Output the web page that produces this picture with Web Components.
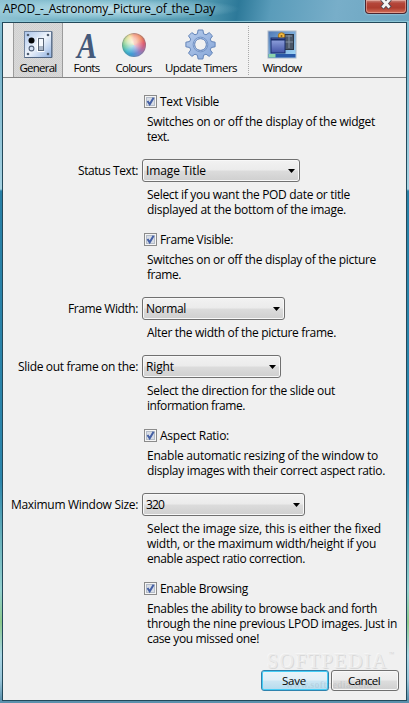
<!DOCTYPE html>
<html lang="en">
<head>
<meta charset="utf-8">
<title>APOD_-_Astronomy_Picture_of_the_Day</title>
<style>
  html, body {
    margin: 0;
    height: 703px;
    overflow: hidden;
  }
  body {
    font-family: "Open Sans", "Noto Sans", sans-serif;
    font-size: 12px;
    line-height: 15px;
    color: #000;
  }
</style>
</head>
<body>
<prefs-window></prefs-window>

<script>
// One line of text, tracked so that it takes the given width.
class FitText extends HTMLElement {
  constructor() {
    super();
    this.attachShadow({ mode: 'open' });
    this.shadowRoot.innerHTML = `
      <style>
        :host { display: block; white-space: nowrap; }
        span { display: inline-block; }
      </style>
      <span><slot></slot></span>
    `;
  }

  connectedCallback() {
    const span = this.shadowRoot.querySelector('span');
    const target = Number(this.getAttribute('width'));
    const count = this.textContent.length;
    if (!target || !count) return;
    const natural = span.getBoundingClientRect().width;
    const spacing = (target - natural) / count;
    span.style.letterSpacing = spacing.toFixed(3) + 'px';
  }
}

class TitleBar extends HTMLElement {
  connectedCallback() {
    this.attachShadow({ mode: 'open' });
    this.shadowRoot.innerHTML = `
      <style>
        :host {
          display: flex;
          justify-content: space-between;
          align-items: flex-start;
          box-sizing: border-box;
          height: 22px;
          padding: 0 2px 0 3px;
          border-bottom: 1px solid #8cc6d6;
          background:
            radial-gradient(ellipse 135px 12px at 105px 9px, rgba(222, 242, 248, .8), rgba(180, 222, 234, .5) 60%, transparent),
            linear-gradient(100deg, #8fc3d3 0, #67aabe 22%, #4f97af 50%, #2d7999 58%, #5a9cba 66%, #78aec9 82%, #6ba5c0 100%);
        }
        .close {
          display: flex;
          justify-content: center;
          box-sizing: border-box;
          width: 42px;
          height: 14px;
          border: 1px solid #4b2630;
          border-top: 0;
          border-radius: 0 0 4px 4px;
          background: linear-gradient(#c98a80 0, #b4463a 25%, #ad3c2e 60%, #d2705a 100%);
          box-shadow: inset 0 0 0 1px rgba(255, 210, 200, .45), 0 0 2px #d4edf5;
        }
        svg { display: block; }
      </style>
      <slot></slot>
      <div class="close">
        <svg width="14" height="10" viewBox="0 0 14 10">
          <path d="M3 -1 L11 8 M11 -1 L3 8" stroke="#4d4650" stroke-width="4.5"/>
          <path d="M3 -1 L10.500 7.500 M11 -1 L3.500 7.500" stroke="#f4f4f4" stroke-width="2.8"/>
        </svg>
      </div>
    `;
  }
}

const ICONS = {
  general: `
    <defs><linearGradient id="p" x1="0" y1="0" x2="1" y2="1">
      <stop offset="0" stop-color="#a9c3ea"/><stop offset=".5" stop-color="#f0f5fc"/><stop offset="1" stop-color="#8fb0e0"/>
    </linearGradient></defs>
    <rect x="2.5" y="3.5" width="27" height="26" fill="url(#p)" stroke="#71839d"/>
    <path d="M3 29.5h27v-26" fill="none" stroke="#526683"/>
    <g fill="#4f5d70"><circle cx="6" cy="7" r="1.3"/><circle cx="26" cy="7" r="1.3"/><circle cx="6" cy="26" r="1.3"/><circle cx="26" cy="26" r="1.3"/></g>
    <circle cx="9.5" cy="12.5" r="3" fill="#050608"/>
    <circle cx="9.5" cy="20.5" r="2.4" fill="#d4e1f4" stroke="#53627a" stroke-width="1.1"/>
    <rect x="16.5" y="10.5" width="5" height="12" fill="#f5f8fd" stroke="#5a6678"/>
    <path d="M17 18h4v4h-4z" fill="#aab6c7"/><path d="M15.5 9.5v14h7" fill="none" stroke="#fff"/>`,
  fonts: `
    <text x="6" y="30" font-family="Liberation Serif, serif" font-style="italic" font-weight="bold" font-size="36" textLength="20" lengthAdjust="spacingAndGlyphs" fill="#455a7b">A</text>`,
  colours: `
    <foreignObject x="4" y="5" width="24" height="24">
      <div style="width:24px;height:24px;border-radius:50%;background:
        radial-gradient(circle at 42% 38%, #fffc 0, #fff9 22%, #fff0 58%),
        conic-gradient(#ef7250, #ed7a4a 12%, #e05a6c 22%, #b86c9e 32%, #7b86cd 43%, #3f9bd4 54%, #36b4c7 64%, #50be81 74%, #a9cf63 84%, #efc95a 93%, #ef7250);
        box-shadow: inset 0 0 1px 1px #6d7e8e88"></div>
    </foreignObject>`,
  timers: `
    <defs><linearGradient id="g" x1="0" y1="0" x2="1" y2="1">
      <stop offset="0" stop-color="#b8cdec"/><stop offset="1" stop-color="#85a5d8"/>
    </linearGradient></defs>
    <g fill="url(#g)" stroke="#6384b8" stroke-width="1" transform="translate(-.500 -.500)">
      <path fill-rule="evenodd" d="M13.6 2.5h4.8l.7 3.8 2.4 1 3.2-2.2 3.3 3.3-2.2 3.2 1 2.4 3.8.7v4.6l-3.8.7-1 2.4 2.2 3.2-3.3 3.3-3.2-2.2-2.4 1-.7 3.800h-4.800l-.7-3.800-2.400-1-3.200 2.200L4 25.600l2.200-3.200-1-2.400-3.800-.7v-4.600l3.800-.7 1-2.400L4 8.400l3.300-3.300 3.200 2.200 2.400-1zM16 11.200a5.800 5.800 0 1 0 .01 0z"/>
      <circle cx="16" cy="17" r="7.400" fill="none" stroke="#7796c7"/>
    </g>`,
  window: `
    <defs><linearGradient id="d" x1="0" y1="0" x2="1" y2="1">
      <stop offset="0" stop-color="#4f78b5"/><stop offset="1" stop-color="#a5dcfc"/>
    </linearGradient><linearGradient id="w" x1="0" y1="0" x2="0" y2="1">
      <stop offset="0" stop-color="#98abe3"/><stop offset="1" stop-color="#4253a5"/>
    </linearGradient></defs>
    <rect x="2" y="3" width="28" height="27" fill="url(#d)" stroke="#aebaca"/>
    <rect x="18.500" y="6.500" width="9" height="15" fill="#4b5768" stroke="#2c3747"/>
    <path d="M20 8h6M19 14h8M23 7v13" stroke="#8694a5"/>
    <circle cx="15.500" cy="8" r="3.300" fill="#f0b83e" stroke="#a8751b"/><circle cx="15.500" cy="8" r="1" fill="#805d20"/>
    <rect x="5" y="10" width="14" height="15" fill="url(#w)" stroke="#192c6b"/>
    <path d="M5 11.500h14" stroke="#192c6b" stroke-width="2"/>
    <rect x="2.500" y="26" width="27" height="3.500" fill="#2959a9"/><rect x="2.500" y="26" width="7" height="3.500" fill="#8cd3ab"/>`
};

class ToolButton extends HTMLElement {
  connectedCallback() {
    this.attachShadow({ mode: 'open' });
    this.shadowRoot.innerHTML = `
      <style>
        :host {
          display: flex;
          flex-direction: column;
          align-items: center;
          box-sizing: border-box;
          padding-top: 5px;
          font-size: 11.5px;
        }
        :host([selected]) {
          background: repeating-conic-gradient(#d1d1d1 0 25%, #d9d9d9 0 50%) 0 0 / 2px 2px;
          border: solid #9c9c9c;
          border-width: 0 1px;
        }
        svg { display: block; height: 32px; overflow: visible; }
      </style>
      <svg width="32" height="32" viewBox="0 0 32 32">${ICONS[this.getAttribute('icon')]}</svg>
      <slot></slot>
    `;
  }
}

class ToolBar extends HTMLElement {
  connectedCallback() {
    this.attachShadow({ mode: 'open' });
    this.shadowRoot.innerHTML = `
      <style>
        :host {
          display: flex;
          box-sizing: border-box;
          height: 55px;
          padding-left: 10px;
          background: #f1f1f1;
          border-bottom: 1px solid #858585;
        }
      </style>
      <slot></slot>
    `;
  }
}

class CheckBox extends HTMLElement {
  connectedCallback() {
    this.attachShadow({ mode: 'open' });
    this.shadowRoot.innerHTML = `
      <style>
        :host {
          display: flex;
          align-items: center;
          gap: 3px;
          height: 15px;
          padding-left: 2px;
        }
        svg { display: block; flex: none; }
      </style>
      <svg width="13" height="13" viewBox="0 0 13 13">
        <rect x=".5" y=".5" width="12" height="12" fill="#f5f5f5" stroke="#8b8b8b"/>
        <rect x="2.5" y="2.5" width="8" height="8" fill="#d8dde6" stroke="#b4bcc8"/>
        <path d="M3.500 6 L5.700 9.300 L9.600 2.700" fill="none" stroke="#4560a5" stroke-width="2"/>
      </svg>
      <slot></slot>
    `;
  }
}

class DropDown extends HTMLElement {
  connectedCallback() {
    this.attachShadow({ mode: 'open' });
    this.shadowRoot.innerHTML = `
      <style>
        :host {
          display: flex;
          align-items: center;
          justify-content: space-between;
          box-sizing: border-box;
          width: var(--w);
          height: 23px;
          padding: 0 4px 0 3px;
          border: 1px solid #707070;
          border-radius: 3px;
          background: linear-gradient(#f2f2f2 0, #ebebeb 48%, #dcdcdc 52%, #cfcfcf 100%);
          box-shadow: inset 0 0 0 1px #f8f8f8;
        }
        svg { display: block; margin-top: 1px; }
      </style>
      <slot></slot>
      <svg width="7" height="4" viewBox="0 0 7 4"><path d="M0 0h7L3.500 4z" fill="#000"/></svg>
    `;
  }
}

// A setting: label on the left, control and help lines on the right.
class PrefRow extends HTMLElement {
  connectedCallback() {
    this.attachShadow({ mode: 'open' });
    this.shadowRoot.innerHTML = `
      <style>
        :host {
          display: grid;
          grid-template-columns: 135px 1fr;
          column-gap: 4px;
          row-gap: 5px;
        }
        .label {
          display: flex;
          align-items: center;
          justify-content: flex-end;
        }
        .control { display: flex; }
        .help { grid-column: 2; padding-left: 5px; }
      </style>
      <div class="label"><slot name="label"></slot></div>
      <div class="control"><slot name="control"></slot></div>
      <div class="help"><slot></slot></div>
    `;
  }
}

class PushButton extends HTMLElement {
  connectedCallback() {
    this.attachShadow({ mode: 'open' });
    this.shadowRoot.innerHTML = `
      <style>
        :host {
          display: flex;
          align-items: center;
          justify-content: center;
          box-sizing: border-box;
          width: 68px;
          height: 21px;
          padding-right: 2px;
          font-size: 11.5px;
          border: 1px solid #707070;
          border-radius: 3px;
          background: linear-gradient(#f2f2f2 0, #ebebeb 48%, #dddddd 52%, #cfcfcf 100%);
          box-shadow: inset 0 0 0 1px #f8f8f8;
        }
        :host([default]) {
          border-color: #2f83ae;
          background: linear-gradient(#eaf4f9 0, #e0eff7 48%, #cce6f3 52%, #b5dbee 100%);
          box-shadow: inset 0 0 0 1px #46cdf6;
        }
      </style>
      <slot></slot>
    `;
  }
}

class PrefsWindow extends HTMLElement {
  connectedCallback() {
    this.attachShadow({ mode: 'open' });
    this.shadowRoot.innerHTML = `
      <style>
        :host {
          display: flex;
          flex-direction: column;
          position: relative;
          box-sizing: border-box;
          width: 409px;
          height: 703px;
          background: linear-gradient(#8cc4d6 0, #78b4cc 60px, #a5d2e2 189px, #2880a6 191px, #2c86ac 480px, #6bb3bd 540px, #93d0cf 590px, #8cc98c 622px, #a9d6e4 655px, #98c4d8 680px, #5b91ad 700px);
        }
        .frame {
          display: flex;
          flex-direction: column;
          box-sizing: border-box;
          width: 405px;
          height: 679px;
          margin-left: 2px;
          border: 1px solid #23495a;
          background: #f0f0f0;
        }
        .rows {
          display: flex;
          flex-direction: column;
          gap: 15px;
          padding-top: 16px;
        }
        .buttons {
          display: flex;
          justify-content: flex-end;
          gap: 2px;
          margin-top: auto;
          padding: 0 7px 9px 0;
        }
        .sep {
          width: 1px;
          margin: 3px 0 2px;
          background: repeating-linear-gradient(#aaa 0 1px, transparent 1px 2px);
        }
        .mark {
          position: absolute;
          left: 267px;
          top: 651px;
          font: 20px/20px "Liberation Serif", serif;
          color: #ebebeb;
          text-shadow: 1px 1px 0 #d9d9d9, -1px -1px 0 #f6f6f6;
        }
        .site {
          position: absolute;
          left: 286px;
          top: 679px;
          font: bold 10px/12px "Liberation Serif", serif;
          color: rgba(120, 130, 140, .16);
        }
        .tm { position: absolute; left: 389px; top: 650px; font-size: 7px; line-height: 9px; color: #d8d8d8; }
      </style>
      <title-bar><fit-text width="212" style="padding-top:1px">APOD_-_Astronomy_Picture_of_the_Day</fit-text></title-bar>
      <div class="frame">
        <tool-bar>
          <tool-button icon="general" selected style="width:50px"><fit-text width="37">General</fit-text></tool-button>
          <tool-button icon="fonts" style="width:47px"><fit-text width="26">Fonts</fit-text></tool-button>
          <tool-button icon="colours" style="width:47px"><fit-text width="36">Colours</fit-text></tool-button>
          <tool-button icon="timers" style="width:88px"><fit-text width="72">Update Timers</fit-text></tool-button>
          <div class="sep" style="margin-left:3px"></div>
          <tool-button icon="window" style="width:66px"><fit-text width="39">Window</fit-text></tool-button>
        </tool-bar>
        <div class="rows">
          <pref-row>
            <check-box slot="control"><fit-text width="59">Text Visible</fit-text></check-box>
            <fit-text width="228">Switches on or off the display of the widget</fit-text>
            <fit-text width="22">text.</fit-text>
          </pref-row>
          <pref-row>
            <fit-text slot="label" width="60">Status Text:</fit-text>
            <drop-down slot="control" style="--w:158px"><fit-text width="60">Image Title</fit-text></drop-down>
            <fit-text width="203">Select if you want the POD date or title</fit-text>
            <fit-text width="199">displayed at the bottom of the image.</fit-text>
          </pref-row>
          <pref-row>
            <check-box slot="control"><fit-text width="73">Frame Visible:</fit-text></check-box>
            <fit-text width="229">Switches on or off the display of the picture</fit-text>
            <fit-text width="34">frame.</fit-text>
          </pref-row>
          <pref-row>
            <fit-text slot="label" width="70">Frame Width:</fit-text>
            <drop-down slot="control" style="--w:143px"><fit-text width="40">Normal</fit-text></drop-down>
            <fit-text width="189">Alter the width of the picture frame.</fit-text>
          </pref-row>
          <pref-row>
            <fit-text slot="label" width="120">Slide out frame on the:</fit-text>
            <drop-down slot="control" style="--w:139px"><fit-text width="28">Right</fit-text></drop-down>
            <fit-text width="188">Select the direction for the slide out</fit-text>
            <fit-text width="98">information frame.</fit-text>
          </pref-row>
          <pref-row>
            <check-box slot="control"><fit-text width="69">Aspect Ratio:</fit-text></check-box>
            <fit-text width="231">Enable automatic resizing of the window to</fit-text>
            <fit-text width="238">display images with their correct aspect ratio.</fit-text>
          </pref-row>
          <pref-row>
            <fit-text slot="label" width="127">Maximum Window Size:</fit-text>
            <drop-down slot="control" style="--w:163px"><fit-text width="18">320</fit-text></drop-down>
            <fit-text width="234">Select the image size, this is either the fixed</fit-text>
            <fit-text width="229">width, or the maximum width/height if you</fit-text>
            <fit-text width="158">enable aspect ratio correction.</fit-text>
          </pref-row>
          <pref-row>
            <check-box slot="control"><fit-text width="88">Enable Browsing</fit-text></check-box>
            <fit-text width="230">Enables the ability to browse back and forth</fit-text>
            <fit-text width="250">through the nine previous LPOD images. Just in</fit-text>
            <fit-text width="112">case you missed one!</fit-text>
          </pref-row>
        </div>
        <div class="buttons">
          <push-button default><fit-text width="24">Save</fit-text></push-button>
          <push-button><fit-text width="32">Cancel</fit-text></push-button>
        </div>
      </div>
      <fit-text class="mark" width="121">SOFTPEDIA</fit-text>
      <span class="tm">™</span>
      <fit-text class="site" width="86">www.softpedia.com</fit-text>
    `;
  }
}

customElements.define('title-bar', TitleBar);
customElements.define('tool-button', ToolButton);
customElements.define('tool-bar', ToolBar);
customElements.define('check-box', CheckBox);
customElements.define('drop-down', DropDown);
customElements.define('pref-row', PrefRow);
customElements.define('push-button', PushButton);
customElements.define('prefs-window', PrefsWindow);
customElements.define('fit-text', FitText);
</script>
</body>
</html>
